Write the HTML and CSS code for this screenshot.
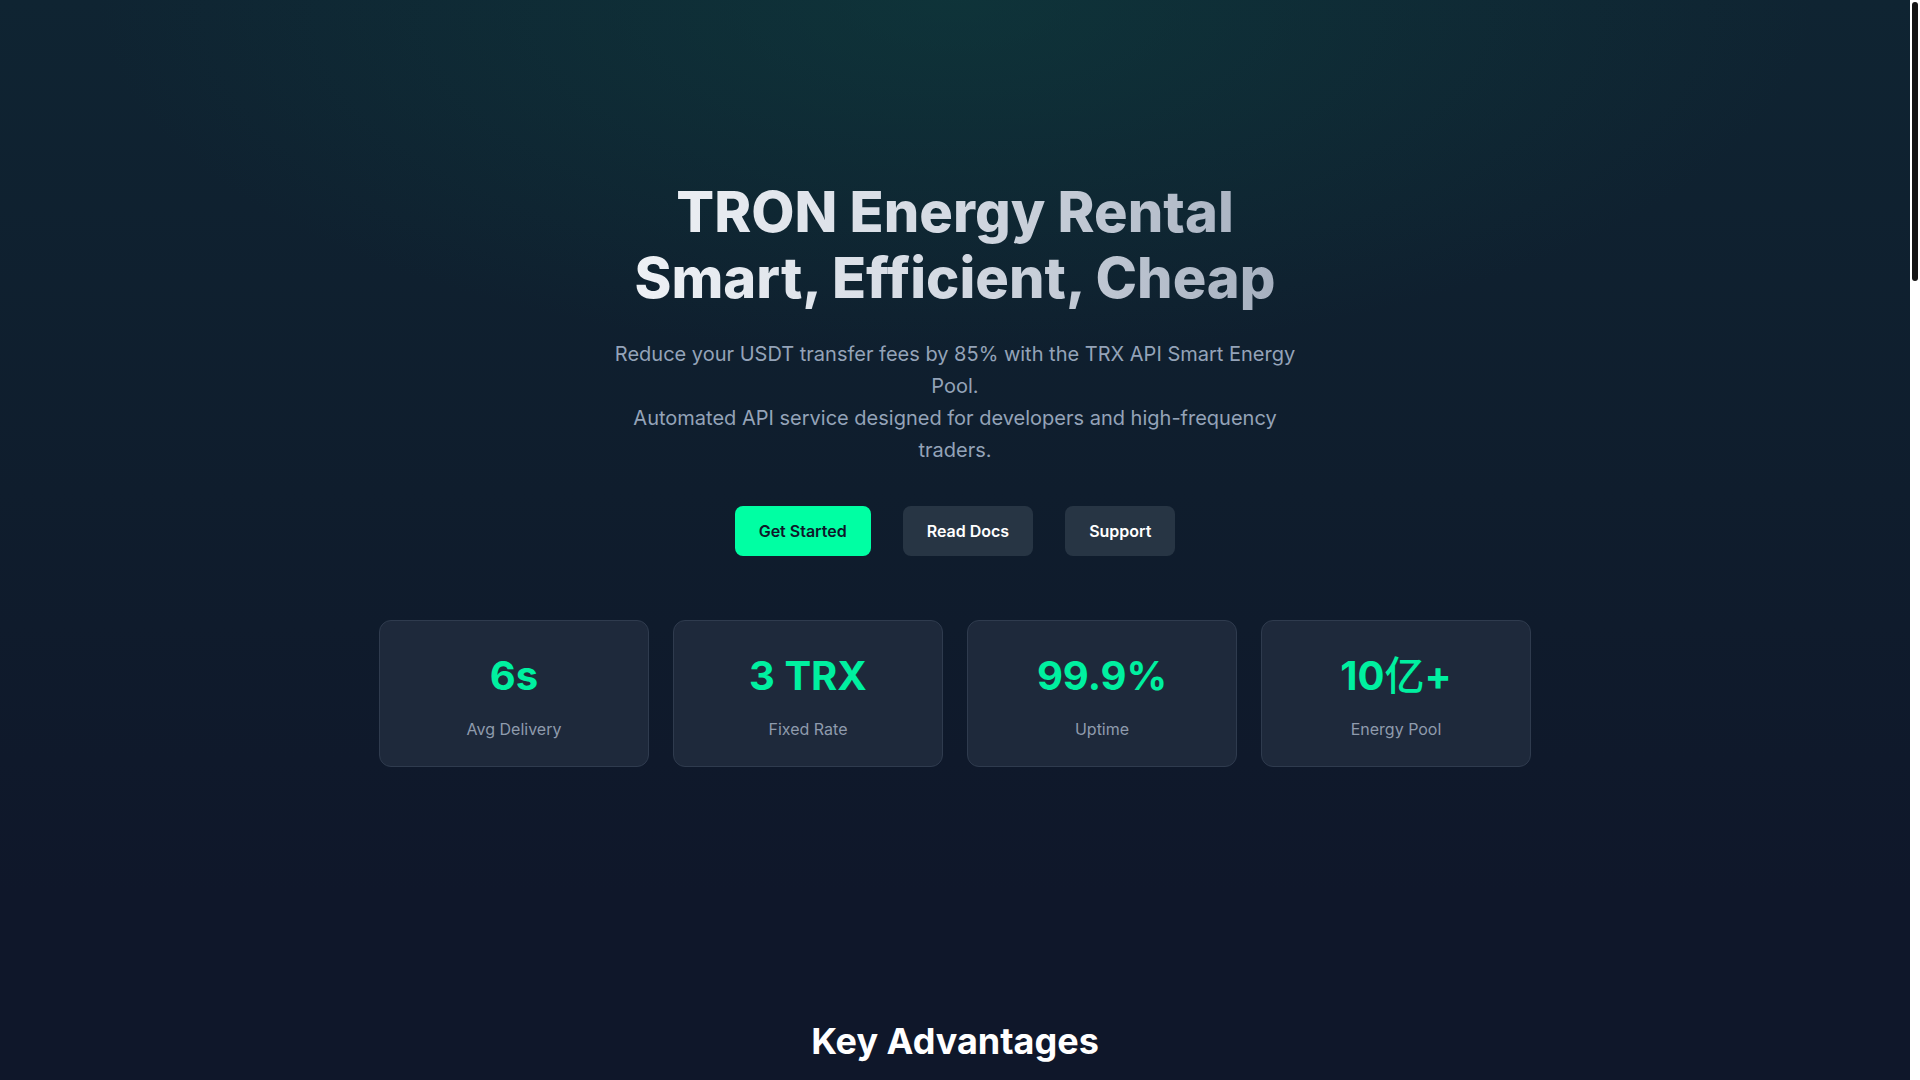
FILE: index.html
```html
<!DOCTYPE html>
<html lang="en">
<head>
<meta charset="utf-8">
<title>TRON Energy Rental - TRX API</title>
<link rel="stylesheet" href="styles.css">
</head>
<body>
<main class="page">
  <section class="hero">
    <div class="hero-inner">
      <h1 class="hero-title"><span class="grad">TRON Energy Rental<br>Smart, Efficient, Cheap</span></h1>
      <p class="hero-sub">Reduce your USDT transfer fees by 85% with the TRX API Smart Energy Pool.<br>Automated API service designed for developers and high-frequency traders.</p>
      <div class="hero-actions">
        <a class="btn btn-primary" href="#start">Get Started</a>
        <a class="btn btn-dark" href="#docs">Read Docs</a>
        <a class="btn btn-dark" href="#support">Support</a>
      </div>
      <div class="stats">
        <div class="stat"><div class="stat-value">6s</div><div class="stat-label">Avg Delivery</div></div>
        <div class="stat"><div class="stat-value">3 TRX</div><div class="stat-label">Fixed Rate</div></div>
        <div class="stat"><div class="stat-value">99.9%</div><div class="stat-label">Uptime</div></div>
        <div class="stat"><div class="stat-value">10<span class="cjk">亿</span>+</div><div class="stat-label">Energy Pool</div></div>
      </div>
    </div>
  </section>

  <section class="section">
    <h2 class="section-title">Key Advantages</h2>
    <div class="features">
      <div class="feature"><h3>Instant Delivery</h3><p>Energy is delegated to your address within seconds after payment is confirmed on-chain.</p></div>
      <div class="feature"><h3>Lowest Cost</h3><p>Save up to 85% on every USDT transfer compared with burning TRX for energy.</p></div>
      <div class="feature"><h3>Developer API</h3><p>Simple REST endpoints with clear documentation and SDK examples for every language.</p></div>
      <div class="feature"><h3>Secure</h3><p>No private keys required. Energy is delegated directly from our pool to your wallet.</p></div>
      <div class="feature"><h3>24/7 Service</h3><p>Fully automated infrastructure monitored around the clock for maximum availability.</p></div>
      <div class="feature"><h3>Huge Pool</h3><p>Over one billion energy available to handle high-frequency trading volumes.</p></div>
    </div>
  </section>

  <section class="section">
    <h2 class="section-title">How It Works</h2>
    <div class="features">
      <div class="feature"><h3>1. Register</h3><p>Create an account and get your API key in less than a minute.</p></div>
      <div class="feature"><h3>2. Deposit</h3><p>Top up your balance with TRX or USDT from any wallet.</p></div>
      <div class="feature"><h3>3. Rent Energy</h3><p>Call the API or use the dashboard to deliver energy to any address.</p></div>
    </div>
  </section>

  <section class="section">
    <h2 class="section-title">Frequently Asked Questions</h2>
    <div class="faq">
      <div class="faq-item"><h3>What is TRON energy?</h3><p>Energy is a resource consumed by smart contract calls such as USDT transfers on the TRON network.</p></div>
      <div class="faq-item"><h3>How long does delivery take?</h3><p>On average energy arrives in about 6 seconds.</p></div>
      <div class="faq-item"><h3>Is there a minimum order?</h3><p>No. You can rent energy for a single transfer.</p></div>
    </div>
  </section>

  <footer class="footer">© TRX API. All rights reserved.</footer>
</main>
<div class="scrollbar" aria-hidden="true"><div class="scrollbar-thumb"></div></div>
</body>
</html>
```

FILE: styles.css
```css
body {
  margin: 0;
  background: #0f172a;
  color: #e2e8f0;
  font-family: Inter, "Noto Sans CJK SC", "Noto Sans", sans-serif;
}

a { text-decoration: none; }

.page { margin-right: 10px; }

.scrollbar {
  position: fixed;
  top: 0;
  right: 0;
  width: 10px;
  height: 100vh;
  background: #ffffff;
}

.scrollbar-thumb {
  margin: 2px 0 0 2px;
  width: 6px;
  height: 279px;
  border-radius: 3px;
  background: #141414;
}

.hero {
  background:
    radial-gradient(ellipse 45% 40% at 50% 0%, rgba(14, 70, 66, 0.45), rgba(14, 70, 66, 0) 100%),
    linear-gradient(180deg, #0f2432 0%, #0f1d2d 55%, #0f172a 100%);
  padding: 179px 24px 127px;
}

.hero-inner {
  max-width: 1152px;
  margin: 0 auto;
  display: flex;
  flex-direction: column;
  align-items: center;
  text-align: center;
}

.hero-title {
  margin: 0 0 27px;
  font-size: 56px;
  line-height: 66px;
  font-weight: 800;
  letter-spacing: 0;
}

.grad {
  display: inline-block;
  background: linear-gradient(90deg, #eef1f5 0%, #d3d9e2 50%, #a6b0bf 100%);
  -webkit-background-clip: text;
  background-clip: text;
  color: transparent;
}

.hero-sub {
  margin: 0 0 40px;
  max-width: 700px;
  font-size: 20px;
  line-height: 32px;
  color: #94a3b8;
}

.hero-actions {
  display: flex;
  gap: 32px;
  margin-bottom: 64px;
}

.btn {
  display: inline-block;
  padding: 13px 24px;
  border-radius: 8px;
  font-size: 16px;
  line-height: 24px;
  font-weight: 600;
}

.btn-primary { background: #00ffa3; color: #0f172a; }
.btn-dark { background: #273544; color: #ffffff; }

.stats {
  width: 100%;
  display: grid;
  grid-template-columns: repeat(4, 1fr);
  gap: 24px;
}

.stat {
  background: #1e293b;
  border: 1px solid #2f3b4e;
  border-radius: 12px;
  padding: 31px 24px 25px;
}

.stat-value {
  font-size: 40px;
  line-height: 47px;
  font-weight: 700;
  color: #00f0a0;
  margin-bottom: 18px;
}

.stat-value .cjk {
  font-family: "Noto Sans CJK SC", sans-serif;
  font-weight: 500;
  line-height: 1;
}

.stat-label {
  font-size: 16px;
  line-height: 24px;
  color: #8f9bad;
}

.section {
  max-width: 1152px;
  margin: 0 auto;
  padding: 127px 24px 40px;
  text-align: center;
}

.section-title {
  margin: 0 0 64px;
  font-size: 36px;
  line-height: 40px;
  font-weight: 700;
  color: #ffffff;
}

.features {
  display: grid;
  grid-template-columns: repeat(3, 1fr);
  gap: 24px;
  text-align: left;
}

.feature, .faq-item {
  background: #1e293b;
  border: 1px solid #2f3b4e;
  border-radius: 12px;
  padding: 32px;
  min-height: 160px;
}

.feature h3, .faq-item h3 {
  margin: 0 0 12px;
  font-size: 20px;
  color: #ffffff;
}

.feature p, .faq-item p {
  margin: 0;
  font-size: 16px;
  line-height: 26px;
  color: #94a3b8;
}

.faq {
  display: flex;
  flex-direction: column;
  gap: 16px;
  text-align: left;
}

.faq-item { min-height: 0; }

.footer {
  padding: 80px 24px 60px;
  text-align: center;
  color: #64748b;
  font-size: 14px;
}
```
